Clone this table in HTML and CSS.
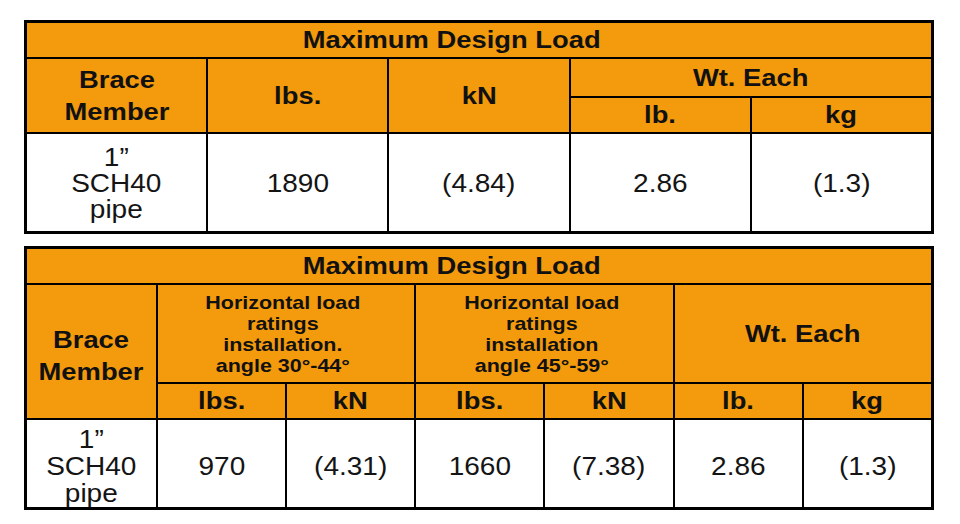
FILE: index.html
```html
<!DOCTYPE html>
<html lang="en">
<head>
<meta charset="utf-8">
<title>Maximum Design Load</title>
<link rel="stylesheet" href="styles.css">
</head>
<body>
<main class="page">
  <section class="tbl t1">
    <div class="c all title"><span class="t">Maximum Design Load</span></div>
    <div class="c rs2 big"><span class="t">Brace<br>Member</span></div>
    <div class="c rs2 big"><span class="t">lbs.</span></div>
    <div class="c rs2 big"><span class="t">kN</span></div>
    <div class="c cs2 big"><span class="t">Wt. Each</span></div>
    <div class="c big"><span class="t">lb.</span></div>
    <div class="c big"><span class="t">kg</span></div>
    <div class="c d"><span class="t">1”<br>SCH40<br>pipe</span></div>
    <div class="c d"><span class="t">1890</span></div>
    <div class="c d"><span class="t">(4.84)</span></div>
    <div class="c d"><span class="t">2.86</span></div>
    <div class="c d"><span class="t">(1.3)</span></div>
  </section>

  <section class="tbl t2">
    <div class="c all title"><span class="t">Maximum Design Load</span></div>
    <div class="c rs2 big low"><span class="t">Brace<br>Member</span></div>
    <div class="c cs2 small"><span class="t">Horizontal load<br>ratings<br>installation.<br>angle 30°-44°</span></div>
    <div class="c cs2 small"><span class="t">Horizontal load<br>ratings<br>installation<br>angle 45°-59°</span></div>
    <div class="c cs2 big"><span class="t">Wt. Each</span></div>
    <div class="c big"><span class="t">lbs.</span></div>
    <div class="c big"><span class="t">kN</span></div>
    <div class="c big"><span class="t">lbs.</span></div>
    <div class="c big"><span class="t">kN</span></div>
    <div class="c big"><span class="t">lb.</span></div>
    <div class="c big"><span class="t">kg</span></div>
    <div class="c d"><span class="t">1”<br>SCH40<br>pipe</span></div>
    <div class="c d"><span class="t">970</span></div>
    <div class="c d"><span class="t">(4.31)</span></div>
    <div class="c d"><span class="t">1660</span></div>
    <div class="c d"><span class="t">(7.38)</span></div>
    <div class="c d"><span class="t">2.86</span></div>
    <div class="c d"><span class="t">(1.3)</span></div>
  </section>
</main>
</body>
</html>
```

FILE: styles.css
```css
html, body {
  margin: 0;
  padding: 0;
  background: #ffffff;
}

body {
  font-family: "Liberation Sans", Arial, sans-serif;
  color: #111111;
}

.page {
  display: flex;
  flex-direction: column;
  gap: 12px;
  padding: 20px 0 0 24px;
}

.tbl {
  display: grid;
  gap: 2px;
  width: 910px;
  box-sizing: border-box;
  border: 3px solid #000;
  background: #000;
}

.t1 {
  grid-template-columns: repeat(5, 1fr);
  grid-template-rows: 34px 37px 34px 97px;
}

.t2 {
  grid-template-columns: 129px repeat(6, 1fr);
  grid-template-rows: 34px 97px 34px 87px;
}

.c {
  display: flex;
  align-items: center;
  justify-content: center;
  text-align: center;
  background: #f49a0d;
  font-weight: bold;
  font-size: 24px;
  line-height: 28px;
  overflow: hidden;
}

.all { grid-column: 1 / -1; }
.rs2 { grid-row: span 2; }
.cs2 { grid-column: span 2; }

.t {
  display: inline-block;
  transform: scaleX(1.14);
  white-space: nowrap;
}

.title {
  font-size: 24px;
  padding-right: 54px;
}

.big {
  line-height: 32px;
}

.small {
  font-size: 18.5px;
  line-height: 21px;
  padding-right: 6px;
}

.small .t {
  transform: scaleX(1.16);
}

.d {
  background: #fff;
  font-weight: normal;
  font-size: 25px;
  line-height: 26px;
  color: #141414;
}

.d .t {
  transform: scaleX(1.12);
}

.t2 .d {
  font-size: 25px;
  line-height: 27px;
  padding-top: 6px;
}

.low {
  padding-top: 8px;
}
```
